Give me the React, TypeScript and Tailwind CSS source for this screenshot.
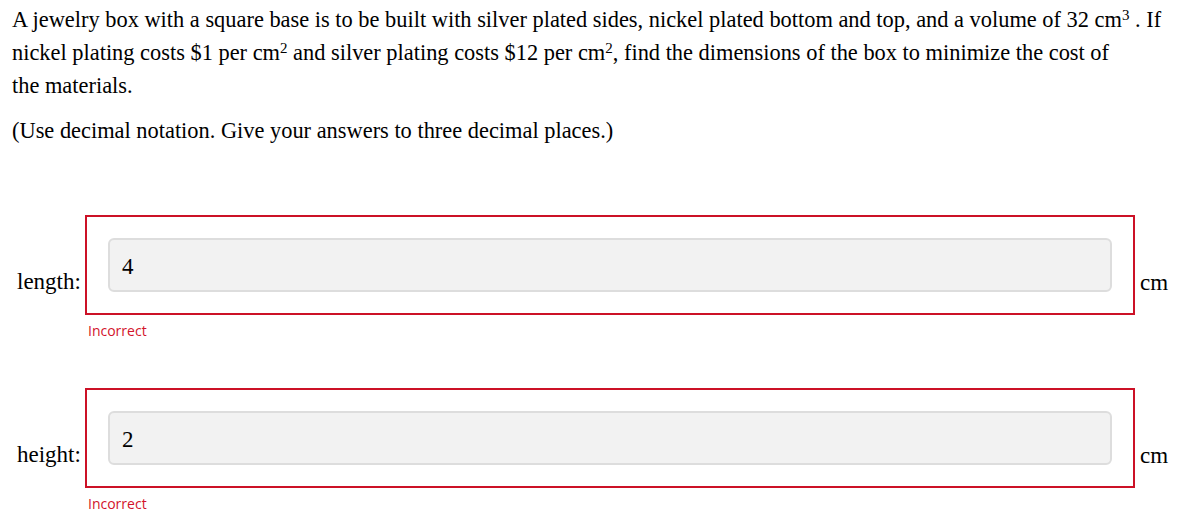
import React from "react";

function Row({ label, value }: { label: string; value: string }) {
  return (
    <div>
      <div className="flex items-start">
        <div className="ml-[17px] mt-[55px] w-[68px] text-[23px] leading-[23px]">{label}</div>
        <div className="w-[1050px] h-[100px] border-2 border-[#cc1126] p-[21px]">
          <div className="h-[54px] w-full rounded-[6px] border-2 border-[#dddddd] bg-[#f2f2f2] pl-[12px] text-[23px] leading-[54px]">
            {value}
          </div>
        </div>
        <div className="ml-[5px] mt-[56px] text-[23px] leading-[23px]">cm</div>
      </div>
      <div className="ml-[88px] mt-[6px] text-[14px] leading-[20px] text-[#d3132b] [font-family:'Open_Sans',sans-serif]">
        Incorrect
      </div>
    </div>
  );
}

export default function App() {
  return (
    <div className="w-[1184px] h-[516px] overflow-hidden bg-white text-black [font-family:'Liberation_Serif',serif]">
      <div className="pl-[12px] pt-[3px] text-[22.4px] leading-[33px] whitespace-nowrap">
        <p>
          A jewelry box with a square base is to be built with silver plated sides, nickel plated bottom and top, and a volume of 32 cm<sup className="text-[15px]">3</sup>&nbsp;. If
          <br />
          nickel plating costs $1 per cm<sup className="text-[15px]">2</sup> and silver plating costs $12 per cm<sup className="text-[15px]">2</sup>, find the dimensions of the box to minimize the cost of
          <br />
          the materials.
        </p>
        <p className="mt-[12px]">(Use decimal notation. Give your answers to three decimal places.)</p>
      </div>
      <div className="mt-[68px]">
        <Row label="length:" value="4" />
        <div className="mt-[47px]">
          <Row label="height:" value="2" />
        </div>
      </div>
    </div>
  );
}
